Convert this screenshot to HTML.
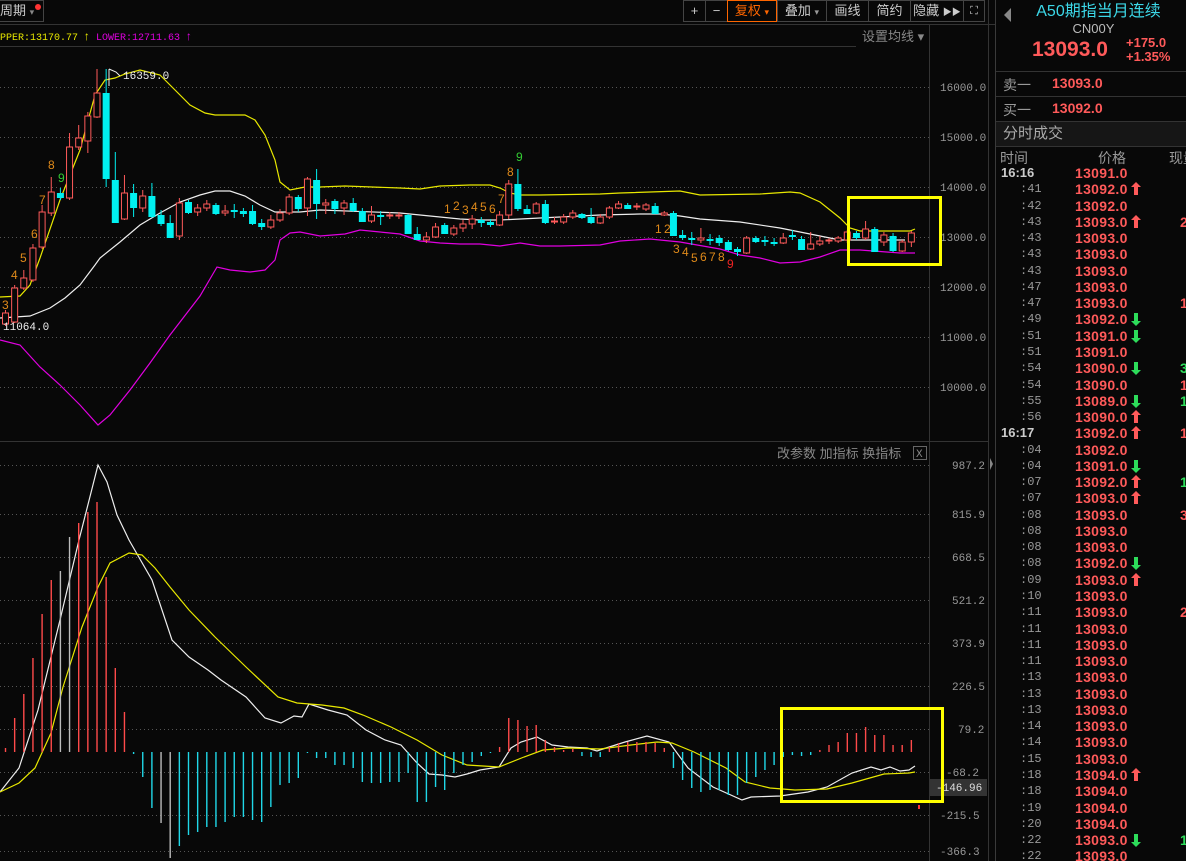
<!DOCTYPE html>
<html><head><meta charset="utf-8">
<style>
*{margin:0;padding:0;box-sizing:border-box}
body{width:1186px;height:861px;background:#080808;overflow:hidden;position:relative;font-family:"Liberation Sans","Noto Sans CJK SC",sans-serif;color:#bbb}
#chart{position:absolute;left:0;top:0}
.tb{position:absolute;top:0;height:22px;border:1px solid #444;color:#ccc;font-size:13px;line-height:20px;text-align:center;white-space:nowrap}
#rp{position:absolute;left:995px;top:0;width:191px;height:861px;border-left:1px solid #3a3a3a;background:#080808;overflow:hidden;white-space:nowrap}
.row{position:absolute;left:0;width:191px;height:16px;font-size:13px;line-height:16px}
.t{position:absolute;left:24px;color:#999;font-size:12px;font-family:"Liberation Mono",monospace}
.tb2{position:absolute;left:5px;color:#ccc;font-weight:bold;font-size:13px}
.p{position:absolute;left:79px;color:#ff5a5a;font-weight:bold;font-size:14px;letter-spacing:0.3px}
.v{position:absolute;left:184px;font-weight:bold;font-size:14px}
.up{color:#ff5a5a}.dn{color:#2ddc5a}
</style></head><body>
<svg id="chart" width="995" height="861" xmlns="http://www.w3.org/2000/svg" font-family="Liberation Mono, monospace">
<rect width="995" height="861" fill="#080808"/>
<g stroke="#333" stroke-width="1">
<line x1="0" y1="24.5" x2="995" y2="24.5"/>
<line x1="0" y1="46.5" x2="856" y2="46.5"/>
<line x1="0" y1="441.5" x2="988" y2="441.5"/>
<line x1="929.5" y1="25" x2="929.5" y2="861"/>
<line x1="988.5" y1="0" x2="988.5" y2="861"/>
</g>
<g stroke="#555" stroke-dasharray="1,3" stroke-width="1">
<line x1="0" y1="87.5" x2="929" y2="87.5"/><line x1="0" y1="137.5" x2="929" y2="137.5"/><line x1="0" y1="187.5" x2="929" y2="187.5"/><line x1="0" y1="237.5" x2="929" y2="237.5"/><line x1="0" y1="287.5" x2="929" y2="287.5"/><line x1="0" y1="337.5" x2="929" y2="337.5"/><line x1="0" y1="387.5" x2="929" y2="387.5"/>
<line x1="0" y1="465.5" x2="929" y2="465.5"/><line x1="0" y1="514.5" x2="929" y2="514.5"/><line x1="0" y1="557.5" x2="929" y2="557.5"/><line x1="0" y1="600.5" x2="929" y2="600.5"/><line x1="0" y1="643.5" x2="929" y2="643.5"/><line x1="0" y1="686.5" x2="929" y2="686.5"/><line x1="0" y1="729.5" x2="929" y2="729.5"/><line x1="0" y1="772.5" x2="929" y2="772.5"/><line x1="0" y1="815.5" x2="929" y2="815.5"/><line x1="0" y1="851.5" x2="929" y2="851.5"/>
</g>
<g fill="#999" font-size="11">
<text x="940" y="91">16000.0</text><text x="940" y="141">15000.0</text><text x="940" y="191">14000.0</text><text x="940" y="241">13000.0</text><text x="940" y="291">12000.0</text><text x="940" y="341">11000.0</text><text x="940" y="391">10000.0</text>
<text x="952" y="469">987.2</text><text x="952" y="518">815.9</text><text x="952" y="561">668.5</text><text x="952" y="604">521.2</text><text x="952" y="647">373.9</text><text x="952" y="690">226.5</text><text x="958" y="733">79.2</text><text x="946" y="776">-68.2</text><text x="940" y="819">-215.5</text><text x="940" y="855">-366.3</text>
</g>
<rect x="930" y="779" width="57" height="17" fill="#333"/>
<text x="936" y="791" fill="#ddd" font-size="11">-146.96</text>
<g id="lines" fill="none" stroke-width="1.2">
<polyline stroke="#e8e800" points="0,297 20,296 30,285 40,258 60,200 80,150 95,95 105,80 115,78 125,74 140,70 160,75 175,90 190,105 205,113 215,115 245,115 255,120 265,135 275,160 280,182 290,190 305,187 320,187 345,186 400,188 420,189 440,186 470,185 490,185 500,188 510,193 520,195 540,195 600,194 620,193 680,191 690,193 700,195 760,194 790,192 800,193 820,202 840,218 850,228 860,231 910,231 915,229"/>
<polyline stroke="#eee" points="0,318 30,316 50,308 65,298 80,285 95,265 100,258 120,242 140,225 160,213 180,202 200,195 215,191 230,191 245,196 260,205 275,212 300,212 320,210 400,213 460,219 480,220 500,220 560,217 600,215 640,214 660,214 680,216 700,219 740,222 780,228 800,232 820,236 840,240 870,240 905,240"/>
<polyline stroke="#e000e0" points="0,340 20,345 40,367 60,385 80,405 98,425 110,415 130,390 150,363 170,335 200,296 217,267 230,270 250,272 265,270 275,260 280,240 290,233 300,232 320,236 345,234 360,230 380,232 400,234 420,241 440,243 460,244 480,244 500,246 520,243 540,246 560,246 600,245 620,241 650,239 680,242 720,249 740,255 760,258 780,263 800,262 820,257 840,250 860,250 900,253 915,253"/>
<polyline stroke="#eee" points="0,792 19,768 38,710 60,620 79,540 98,465 107,482 117,515 129,540 152,580 172,640 189,657 208,670 221,680 246,697 265,718 281,723 294,716 302,717 309,704 328,710 347,715 366,730 385,740 401,745 417,763 429,774 442,775 455,777 467,774 480,770 499,767 511,748 521,742 537,737 552,745 568,747 587,748 597,751 606,748 625,742 647,736 669,742 688,768 713,787 742,800 751,797 780,796 808,792 827,787 852,773 871,767 881,770 890,767 900,771 909,770 915,766"/>
<polyline stroke="#e8e800" points="0,792 19,783 35,768 51,733 63,687 82,627 98,587 110,563 129,553 142,555 155,568 170,587 189,610 215,637 246,667 278,697 297,703 322,705 344,708 363,715 391,727 417,740 442,755 467,765 499,767 524,757 543,750 568,748 600,749 631,745 657,742 672,743 694,752 726,768 745,782 770,788 795,790 827,789 852,783 884,774 909,773 915,772"/>
</g>
<g id="cand"></g>
<g id="hist"></g>
<g font-family="Liberation Sans,sans-serif" font-size="12" fill="#e08a1a">
<text x="2" y="309">3</text><text x="11" y="279">4</text><text x="20" y="262">5</text><text x="31" y="238">6</text><text x="39" y="204">7</text><text x="48" y="169">8</text><text x="58" y="182" fill="#3c3">9</text>
<text x="444" y="213">1</text><text x="453" y="210">2</text><text x="462" y="214">3</text><text x="471" y="211">4</text><text x="480" y="211">5</text><text x="489" y="213">6</text><text x="498" y="203">7</text><text x="507" y="176">8</text><text x="516" y="161" fill="#3c3">9</text>
<text x="655" y="233">1</text><text x="664" y="233">2</text><text x="673" y="253">3</text><text x="682" y="256">4</text><text x="691" y="262">5</text><text x="700" y="261">6</text><text x="709" y="261">7</text><text x="718" y="261">8</text><text x="727" y="268" fill="#e22">9</text>
</g>
<text x="123" y="79" fill="#eee" font-size="11">16359.0</text>
<path d="M109 69 L109 86 M109 69 L116 72 L120 76" stroke="#eee" fill="none"/>
<text x="3" y="330" fill="#eee" font-size="11">11064.0</text>
<text x="0" y="40" fill="#e8e800" font-size="10">PPER:13170.77</text>
<text x="83" y="40" fill="#e8e800" font-size="12">↑</text>
<text x="96" y="40" fill="#e000e0" font-size="10">LOWER:12711.63</text>
<text x="185" y="40" fill="#e000e0" font-size="12">↑</text>
<text x="862" y="41" fill="#888" font-size="13" font-family="Liberation Sans,Noto Sans CJK SC,sans-serif">设置均线 ▾</text>
<text x="777" y="458" fill="#888" font-size="13" font-family="Liberation Sans,Noto Sans CJK SC,sans-serif">改参数  加指标  换指标</text>
<rect x="913.5" y="446.5" width="13" height="13" fill="none" stroke="#666"/>
<text x="916" y="457" fill="#888" font-size="11">X</text>
<rect x="848.5" y="197.5" width="92" height="67" fill="none" stroke="#ffff00" stroke-width="3"/>
<rect x="781.5" y="708.5" width="161" height="93" fill="none" stroke="#ffff00" stroke-width="3"/>
<rect x="918" y="805" width="2" height="4" fill="#f33"/>
<path d="M990 458 L993 464 L990 470 Z" fill="#888"/>
</svg>
<div class="tb" style="left:0;width:44px;border-left:none;text-align:left;padding-left:0">周期 <span style="font-size:9px;color:#888">▾</span><span style="position:absolute;left:35px;top:3px;width:6px;height:6px;border-radius:3px;background:#f33"></span></div>
<div class="tb" style="left:683px;width:23px">+</div>
<div class="tb" style="left:705px;width:23px">−</div>
<div class="tb" style="left:727px;width:50px;border-color:#f60;color:#f60">复权 <span style="font-size:9px">▾</span></div>
<div class="tb" style="left:777px;width:50px">叠加 <span style="font-size:9px;color:#999">▾</span></div>
<div class="tb" style="left:826px;width:43px">画线</div>
<div class="tb" style="left:868px;width:43px">简约</div>
<div class="tb" style="left:910px;width:54px">隐藏 <span style="font-size:9px">▶▶</span></div>
<div class="tb" style="left:963px;width:22px;font-size:11px">⛶</div>
<div id="rp">
<div style="position:absolute;left:8px;top:8px;width:0;height:0;border-top:7px solid transparent;border-bottom:7px solid transparent;border-right:7px solid #888"></div>
<div style="position:absolute;left:0;width:191px;top:3px;height:18px;line-height:18px;text-align:center;color:#3cd8e8;font-size:16px;padding-left:14px">A50期指当月连续</div>
<div style="position:absolute;left:0;width:191px;top:22px;height:14px;line-height:14px;text-align:center;color:#bbb;font-size:13px;padding-left:4px">CN00Y</div>
<div style="position:absolute;left:36px;top:38px;line-height:24px;color:#ff5a5a;font-size:21px;font-weight:bold">13093.0</div>
<div style="position:absolute;left:130px;top:36px;color:#ff5a5a;font-size:13px;font-weight:bold;line-height:14px">+175.0<br>+1.35%</div>
<div style="position:absolute;left:0;top:71px;width:191px;border-top:1px solid #333"></div>
<div style="position:absolute;left:7px;top:75px;font-size:14px;color:#999">卖一</div>
<div style="position:absolute;left:56px;top:75px;font-size:14px;color:#ff5a5a;font-weight:bold">13093.0</div>
<div style="position:absolute;left:0;top:96px;width:191px;border-top:1px solid #333"></div>
<div style="position:absolute;left:7px;top:100px;font-size:14px;color:#999">买一</div>
<div style="position:absolute;left:56px;top:100px;font-size:14px;color:#ff5a5a;font-weight:bold">13092.0</div>
<div style="position:absolute;left:0;top:121px;width:191px;height:26px;border-top:1px solid #333;border-bottom:1px solid #333;background:#161616;color:#aaa;font-size:15px;line-height:24px;padding-left:7px">分时成交</div>
<div style="position:absolute;left:4px;top:148px;font-size:14px;color:#999">时间</div>
<div style="position:absolute;left:102px;top:148px;font-size:14px;color:#999">价格</div>
<div style="position:absolute;left:173px;top:148px;font-size:14px;color:#999;width:40px">现量</div>
<div id="rows"></div>
</div>
<script>
(function(){
var C=[[313,324,1,310,326],[288,322,1,285,323],[278,288,1,270,290],[248,280,1,244,282],[212,247,1,205,249],[192,213,1,177,216],[193,197,0,188,200],[147,198,1,133,200],[138,147,1,125,150],[116,141,1,112,153],[93,117,1,69,118],[93,178,0,69,187],[180,222,0,152,222],[193,219,1,175,220],[193,207,0,184,217],[196,208,1,190,212],[196,216,0,183,218],[215,223,0,210,226],[223,237,0,215,238],[203,236,1,198,240],[202,212,0,200,214],[208,212,1,204,216],[204,208,1,200,211],[205,213,0,203,215],[211,213,1,205,216],[210,211,0,204,218],[211,213,0,208,217],[211,223,0,205,225],[223,226,0,219,230],[220,227,1,215,229],[213,220,1,209,222],[197,213,1,194,215],[197,208,0,195,212],[179,208,1,177,216],[180,203,0,169,219],[203,205,1,199,214],[201,208,0,199,214],[203,208,1,200,215],[203,210,0,198,212],[211,221,0,208,222],[215,221,1,206,223],[215,216,0,211,225],[215,216,1,212,219],[215,216,1,212,219],[215,233,0,214,234],[234,239,0,227,240],[237,240,1,232,243],[227,237,1,223,238],[225,233,0,223,234],[228,234,1,225,236],[224,228,1,220,232],[219,224,1,215,229],[220,222,0,217,227],[222,224,0,219,227],[215,225,1,211,226],[184,215,1,180,219],[184,208,0,169,211],[209,213,0,205,214],[204,213,1,202,214],[204,222,0,200,224],[221,222,1,217,224],[217,222,1,214,224],[213,217,1,210,219],[214,217,0,213,219],[217,222,0,208,224],[217,223,1,214,224],[208,217,1,206,219],[204,208,1,201,209],[205,208,0,203,209],[206,207,1,203,210],[205,209,1,203,211],[206,213,0,203,214],[213,215,1,211,216],[213,235,0,211,236],[235,237,0,230,240],[238,239,0,232,245],[238,240,1,228,243],[239,240,0,234,245],[238,242,0,235,246],[242,249,0,240,251],[249,251,0,247,256],[238,253,1,236,254],[238,241,0,236,243],[240,241,0,236,246],[242,243,0,238,246],[238,243,1,233,244],[235,236,0,230,240],[239,249,0,236,250],[244,249,1,232,250],[241,244,1,236,246],[240,241,1,238,244],[238,241,1,236,243],[232,240,1,230,243],[233,237,0,231,240],[229,238,1,221,240],[229,251,0,227,252],[235,242,1,232,246],[236,250,0,233,252],[242,251,1,240,252],[233,242,1,231,247]];
var s='';
for(var i=0;i<C.length;i++){var c=C[i],x=5.5+9.15*i,col=c[2]?'#ff5a5a':'#00f0f0';
s+='<line x1="'+x+'" y1="'+c[3]+'" x2="'+x+'" y2="'+c[4]+'" stroke="'+col+'"/>';
var h=Math.max(1,c[1]-c[0]);
if(c[2])s+='<rect x="'+(x-3)+'" y="'+c[0]+'" width="6" height="'+h+'" fill="#080808" stroke="'+col+'"/>';
else s+='<rect x="'+(x-3.5)+'" y="'+c[0]+'" width="7" height="'+(h+1)+'" fill="'+col+'"/>';}
document.getElementById('cand').innerHTML=s;
var H=[748,718,694,658,614,580,571,537,523,512,502,577,668,712,754,777,808,823,858,846,835,832,827,827,822,817,817,820,822,807,785,783,778,753,758,758,765,765,768,782,783,783,782,782,773,802,802,787,790,773,765,762,756,753,747,718,720,726,725,740,747,750,749,756,757,757,747,743,742,742,742,743,748,768,780,788,792,790,790,795,795,783,777,770,765,757,755,756,755,750,745,742,733,733,727,735,735,745,745,740];
var z=752,t='';
for(var j=0;j<H.length;j++){var x2=5.5+9.15*j,y=H[j],col=y<z?'#ff4a4a':'#20d8e8';if(j==6||j==7||j==17||j==18)col='#bbb';
t+='<line x1="'+x2+'" y1="'+z+'" x2="'+x2+'" y2="'+y+'" stroke="'+col+'" stroke-width="1.4"/>';}
document.getElementById('hist').innerHTML=t;
var R=[["16:16","13091.0","",""],[":41","13092.0","u",""],[":42","13092.0","",""],[":43","13093.0","u","2"],[":43","13093.0","",""],[":43","13093.0","",""],[":43","13093.0","",""],[":47","13093.0","",""],[":47","13093.0","","1"],[":49","13092.0","d",""],[":51","13091.0","d",""],[":51","13091.0","",""],[":54","13090.0","d","3g"],[":54","13090.0","","1"],[":55","13089.0","d","1g"],[":56","13090.0","u",""],["16:17","13092.0","u","1"],[":04","13092.0","",""],[":04","13091.0","d",""],[":07","13092.0","u","1g"],[":07","13093.0","u",""],[":08","13093.0","","3"],[":08","13093.0","",""],[":08","13093.0","",""],[":08","13092.0","d",""],[":09","13093.0","u",""],[":10","13093.0","",""],[":11","13093.0","","2"],[":11","13093.0","",""],[":11","13093.0","",""],[":11","13093.0","",""],[":13","13093.0","",""],[":13","13093.0","",""],[":13","13093.0","",""],[":14","13093.0","",""],[":14","13093.0","",""],[":15","13093.0","",""],[":18","13094.0","u",""],[":18","13094.0","",""],[":19","13094.0","",""],[":20","13094.0","",""],[":22","13093.0","d","1g"],[":22","13093.0","",""]];
var h2='';
for(var k=0;k<R.length;k++){var r=R[k],y3=165+k*16.27;
h2+='<div class="row" style="top:'+y3+'px">';
h2+=r[0].length>3?'<span class="tb2">'+r[0]+'</span>':'<span class="t">'+r[0]+'</span>';
h2+='<span class="p">'+r[1]+'</span>';
if(r[2]=='u')h2+='<span style="position:absolute;left:138px;top:3px;width:4px;height:11px;background:#ff5a5a"></span><span style="position:absolute;left:135px;top:1px;border-left:5px solid transparent;border-right:5px solid transparent;border-bottom:5px solid #ff5a5a"></span>';
if(r[2]=='d')h2+='<span style="position:absolute;left:138px;top:2px;width:4px;height:9px;background:#2ddc5a"></span><span style="position:absolute;left:135px;top:10px;border-left:5px solid transparent;border-right:5px solid transparent;border-top:5px solid #2ddc5a"></span>';
if(r[3])h2+='<span class="v '+(r[3].indexOf('g')>0?'dn':'up')+'">'+r[3].replace('g','')+'</span>';
h2+='</div>';}
document.getElementById('rows').innerHTML=h2;
})();
</script>
</body></html>
